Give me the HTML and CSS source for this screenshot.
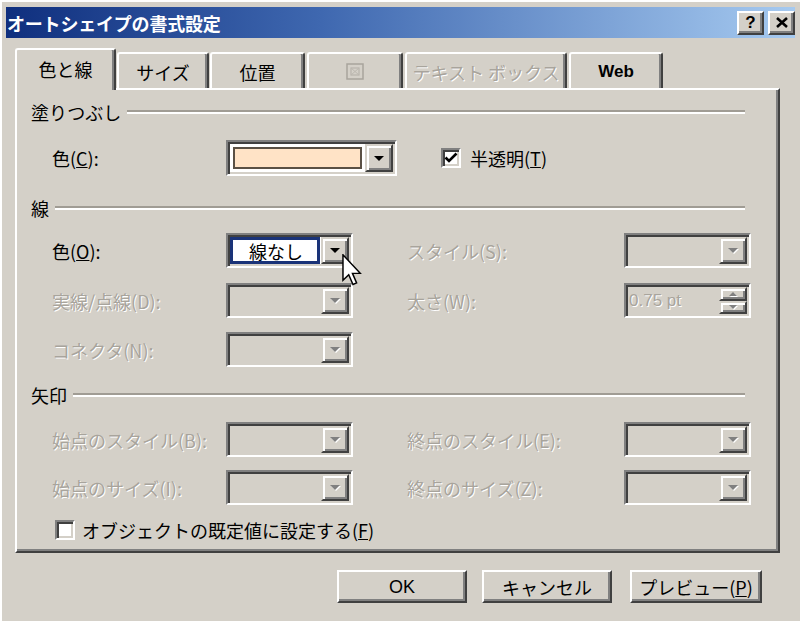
FILE: index.html
```html
<!DOCTYPE html>
<html lang="ja">
<head>
<meta charset="utf-8">
<title>オートシェイプの書式設定</title>
<link rel="stylesheet" href="styles.css">
</head>
<body>
<div class="window">
  <div class="titlebar">
    <span class="title">オートシェイプの書式設定</span>
    <div class="tbtns">
      <span class="tbtn help">?</span>
      <span class="tbtn close"><svg width="12" height="11" viewBox="0 0 12 11"><path d="M1 1 L11 10 M11 1 L1 10" stroke="#000" stroke-width="2.6"/></svg></span>
    </div>
  </div>

  <div class="tabs">
    <div class="tab sel w1">色と線</div>
    <div class="tab w2">サイズ</div>
    <div class="tab w3">位置</div>
    <div class="tab w4 dis"><svg width="18" height="17" viewBox="0 0 18 17"><rect x="1" y="1" width="16" height="15" fill="none" stroke="#a8a49c" stroke-width="1.5"/><rect x="5" y="5" width="8" height="7" fill="none" stroke="#b8b4ac" stroke-width="1.2"/><path d="M5 5 L13 12 M13 5 L5 12" stroke="#bcb8b0" stroke-width="1"/></svg></div>
    <div class="tab w5 dis">テキスト ボックス</div>
    <div class="tab w6 web">Web</div>
  </div>

  <div class="panel">
    <div class="hdr h1"><span>塗りつぶし</span><span class="hdr-line"></span></div>
    <div class="row r-fill">
      <span class="lab1">色(<u>C</u>):</span>
      <div class="combo wide white">
        <div class="field"><span class="swatch"></span></div>
        <span class="drop"><span class="arrow"></span></span>
      </div>
      <span class="chk checked"><svg width="14" height="12" viewBox="0 0 14 12"><path d="M1.5 5.5 L5 9 L12.5 1.5" fill="none" stroke="#000" stroke-width="2.6"/></svg></span>
      <span class="chk-label">半透明(<u>T</u>)</span>
    </div>

    <div class="hdr h2"><span>線</span><span class="hdr-line"></span></div>
    <div class="row r1">
      <span class="lab1">色(<u>O</u>):</span>
      <div class="combo white">
        <div class="field"><span class="focus">線なし</span></div>
        <span class="drop"><span class="arrow"></span></span>
      </div>
      <span class="sp"></span>
      <span class="lab2 dis">スタイル(S):</span>
      <div class="combo"><div class="field"></div><span class="drop"><span class="arrow off"></span></span></div>
    </div>
    <div class="row r2">
      <span class="lab1 dis">実線/点線(D):</span>
      <div class="combo"><div class="field"></div><span class="drop"><span class="arrow off"></span></span></div>
      <span class="sp"></span>
      <span class="lab2 dis">太さ(W):</span>
      <div class="combo">
        <div class="field spintext">0.75 pt</div>
        <span class="spin">
          <span class="spb"><span class="arrow up off"></span></span>
          <span class="spb"><span class="arrow sm off"></span></span>
        </span>
      </div>
    </div>
    <div class="row r3">
      <span class="lab1 dis">コネクタ(N):</span>
      <div class="combo"><div class="field"></div><span class="drop"><span class="arrow off"></span></span></div>
    </div>

    <div class="hdr h3"><span>矢印</span><span class="hdr-line"></span></div>
    <div class="row r4">
      <span class="lab1 dis">始点のスタイル(B):</span>
      <div class="combo"><div class="field"></div><span class="drop"><span class="arrow off"></span></span></div>
      <span class="sp"></span>
      <span class="lab2 dis">終点のスタイル(E):</span>
      <div class="combo"><div class="field"></div><span class="drop"><span class="arrow off"></span></span></div>
    </div>
    <div class="row r5">
      <span class="lab1 dis">始点のサイズ(I):</span>
      <div class="combo"><div class="field"></div><span class="drop"><span class="arrow off"></span></span></div>
      <span class="sp"></span>
      <span class="lab2 dis">終点のサイズ(Z):</span>
      <div class="combo"><div class="field"></div><span class="drop"><span class="arrow off"></span></span></div>
    </div>
    <div class="row r6">
      <span class="chk"></span>
      <span class="chk-label">オブジェクトの既定値に設定する(<u>F</u>)</span>
    </div>
  </div>

  <div class="buttons">
    <span class="btn b-ok">OK</span>
    <span class="btn b-cancel">キャンセル</span>
    <span class="btn b-prev">プレビュー(<u>P</u>)</span>
  </div>

  <svg class="cursor" width="20" height="32" viewBox="0 0 12 19.5"><path d="M0.5 0.5 L0.5 16 L4 12.6 L6.6 18.6 L8.8 17.6 L6.3 11.8 L11 11.8 Z" fill="#fff" stroke="#000" stroke-width="0.9" stroke-linejoin="miter"/></svg>
</div>
</body>
</html>
```
FILE: styles.css
```css
html, body {
  margin: 0;
  padding: 0;
  background: #d4d0c8;
}
body {
  font-family: "Noto Sans CJK JP", "DejaVu Sans", sans-serif;
  font-size: 18px;
  line-height: 1;
  color: #000;
}
.window {
  position: relative;
  width: 800px;
  height: 621px;
  box-sizing: border-box;
  padding: 7px 5px 0 6px;
  background: #d4d0c8;
  border-left: 2px solid #fff;
  border-top: 2px solid #fff;
  overflow: hidden;
}
.titlebar {
  height: 31px;
  margin-top: -2px;
  margin-left: -2px;
  background: linear-gradient(to right, #0f2f7e 0%, #3f68b0 40%, #a6caf0 100%);
  display: flex;
  align-items: center;
  justify-content: space-between;
  padding: 0 0 0 1px;
}
.title {
  color: #fff;
  font-weight: bold;
  font-size: 18px;
  letter-spacing: -0.2px;
}
.tbtns {
  display: flex;
  gap: 4px;
  align-items: center;
}
.tbtn {
  box-sizing: border-box;
  width: 27px;
  height: 24px;
  background: #d4d0c8;
  border: 2px solid;
  border-color: #fff #404040 #404040 #fff;
  box-shadow: inset -2px -2px #808080;
  display: flex;
  align-items: center;
  justify-content: center;
  font-family: "Liberation Sans", sans-serif;
  font-weight: bold;
  font-size: 17px;
}
.tabs {
  display: flex;
  align-items: flex-end;
  height: 40px;
  margin-top: 10px;
  margin-left: 7px;
  position: relative;
  z-index: 2;
}
.tab {
  box-sizing: border-box;
  height: 36px;
  border-top: 2px solid #fff;
  border-left: 2px solid #fff;
  border-right: 2px solid #404040;
  box-shadow: inset -2px 0 #808080;
  border-radius: 3px 3px 0 0;
  display: flex;
  align-items: center;
  justify-content: center;
  background: #d4d0c8;
  padding-top: 1px;
}
.tab.sel {
  height: 42px;
  margin-bottom: -2px;
  padding-bottom: 4px;
}
.w1 { width: 101px; }
.w2 { width: 92px; margin-left: 1px; }
.w3 { width: 95px; margin-left: 1px; }
.w4 { width: 96px; margin-left: 2px; }
.w5 { width: 162px; margin-left: 2px; }
.w6 { width: 94px; margin-left: 2px; }
.web {
  font-family: "Liberation Sans", sans-serif;
  font-weight: bold;
  font-size: 17px;
}
.dis {
  color: #a8a49c;
  text-shadow: 1px 1px 0 #fff;
}
.panel {
  box-sizing: border-box;
  width: 765px;
  height: 465px;
  margin-left: 7px;
  border-top: 2px solid #fff;
  border-left: 2px solid #fff;
  border-right: 2px solid #404040;
  border-bottom: 2px solid #404040;
  box-shadow: inset -2px -2px #808080;
  display: flex;
  flex-direction: column;
}
.hdr {
  display: flex;
  align-items: center;
  height: 24px;
  padding-left: 14px;
  margin-right: 33px;
}
.hdr-line {
  flex: 1;
  height: 0;
  border-top: 2px solid #a09c94;
  border-bottom: 2px solid #fff;
  margin-left: 6px;
}
.h1 { margin-top: 10px; }
.h2 { margin-top: 20px; }
.h3 { margin-top: 16px; }
.row {
  display: flex;
  align-items: center;
  height: 35px;
  padding-left: 35px;
}
.r-fill { margin-top: 16px; height: 36px; }
.r1 { margin-top: 13px; }
.r2 { margin-top: 15px; }
.r3 { margin-top: 14px; }
.r4 { margin-top: 15px; }
.r5 { margin-top: 13px; }
.r6 { margin-top: 14px; height: 22px; padding-left: 38px; }
.lab1 { width: 174px; }
.lab2 { width: 217px; }
.sp { width: 54px; }
.combo {
  box-sizing: border-box;
  width: 127px;
  height: 35px;
  border: 2px solid;
  border-color: #808080 #fff #fff #808080;
  box-shadow: inset 2px 2px #404040, inset -2px -2px #d4d0c8;
  padding: 2px;
  display: flex;
  background: #d4d0c8;
}
.combo.wide { width: 171px; height: 36px; }
.combo.white .field { background: #fff; }
.field {
  flex: 1;
  display: flex;
  align-items: center;
  min-width: 0;
}
.swatch {
  flex: 1;
  align-self: stretch;
  margin: 3px 3px 3px 3px;
  background: #ffe3c6;
  border: 2px solid #5a5044;
}
.focus {
  flex: 1;
  align-self: stretch;
  margin: 0 1px 0 0;
  border: 3px solid #1a3378;
  display: flex;
  align-items: center;
  padding-left: 16px;
  box-sizing: border-box;
}
.drop, .spb {
  box-sizing: border-box;
  width: 28px;
  border: 2px solid;
  border-color: #d4d0c8 #404040 #404040 #d4d0c8;
  box-shadow: inset 2px 2px #fff, inset -2px -2px #808080;
  background: #d4d0c8;
  display: flex;
  align-items: center;
  justify-content: center;
}
.spin {
  display: flex;
  flex-direction: column;
}
.spb { flex: 1; }
.arrow {
  width: 0;
  height: 0;
  border-left: 5px solid transparent;
  border-right: 5px solid transparent;
  border-top: 5px solid #000;
}
.arrow.off {
  border-top-color: #808080;
  filter: drop-shadow(1px 1px 0 #fff);
}
.arrow.sm {
  border-left-width: 4px;
  border-right-width: 4px;
  border-top-width: 4px;
}
.arrow.up {
  border-left-width: 4px;
  border-right-width: 4px;
  border-top: none;
  border-bottom: 4px solid #808080;
}
.spintext {
  padding-left: 1px;
  font-family: "Liberation Sans", sans-serif;
  font-size: 17px;
  color: #a8a49c;
  text-shadow: 1px 1px 0 #fff;
}
.chk {
  box-sizing: border-box;
  width: 20px;
  height: 20px;
  border: 2px solid;
  border-color: #808080 #fff #fff #808080;
  box-shadow: inset 2px 2px #404040, inset -2px -2px #d4d0c8;
  background: #fff;
  display: flex;
  align-items: center;
  justify-content: center;
}
.r-fill .chk { margin-left: 44px; }
.chk-label { margin-left: 9px; }
.r6 .chk-label { margin-left: 7px; }
.buttons {
  display: flex;
  justify-content: flex-end;
  margin-top: 17px;
  padding-right: 33px;
}
.btn {
  box-sizing: border-box;
  height: 33px;
  border: 2px solid;
  border-color: #fff #404040 #404040 #fff;
  box-shadow: inset -2px -2px #808080;
  display: flex;
  align-items: center;
  justify-content: center;
  background: #d4d0c8;
}
.b-ok { width: 130px; font-family: "Liberation Sans", sans-serif; }
.b-cancel { width: 130px; margin-left: 15px; }
.b-prev { width: 132px; margin-left: 18px; }
.cursor {
  position: absolute;
  left: 340px;
  top: 252px;
}
```
